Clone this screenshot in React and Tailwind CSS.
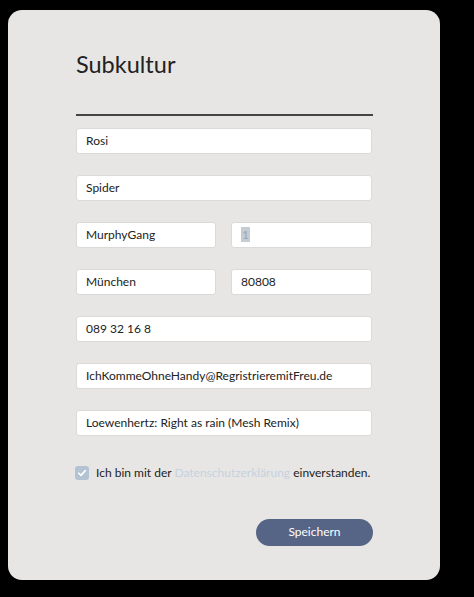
const font = { fontFamily: 'Lato, "Noto Sans", sans-serif' };

function Field({ value, className = "", selected = false }) {
  return (
    <div
      className={
        "h-[26px] bg-white border border-[#dcdad8] rounded-[3px] flex items-center pl-[9px] text-[12px] text-[#222] " +
        className
      }
    >
      {selected ? (
        <span className="bg-[#c5ccd4] text-[#9aa6b2] leading-[15px] px-[1px]">{value}</span>
      ) : (
        <span>{value}</span>
      )}
    </div>
  );
}

export default function App() {
  return (
    <div className="min-h-screen bg-black pt-[10px] pl-[8px]" style={font}>
      <div className="w-[432px] h-[570px] bg-[#e8e6e4] rounded-[14px] pl-[68px] pr-[67px] pt-[40px]">
        <h1 className="text-[23.5px] leading-[29px] text-[#222] font-normal">Subkultur</h1>
        <div className="mt-[35px] h-[1.5px] bg-[#444] w-[297px]" />
        <div className="mt-[12px] flex flex-col gap-[21px] w-[296px]">
          <Field value="Rosi" />
          <Field value="Spider" />
          <div className="flex gap-[15px]">
            <Field value="MurphyGang" className="w-[140px]" />
            <Field value="1" className="flex-1" selected />
          </div>
          <div className="flex gap-[15px]">
            <Field value="München" className="w-[140px]" />
            <Field value="80808" className="flex-1" />
          </div>
          <Field value="089 32 16 8" />
          <Field value="IchKommeOhneHandy@RegristrieremitFreu.de" />
          <Field value="Loewenhertz: Right as rain (Mesh Remix)" />
        </div>
        <label className="mt-[28px] -ml-[1px] flex items-center gap-[7px] text-[12px] text-[#222] whitespace-nowrap">
          <span className="shrink-0 w-[14px] h-[14px] rounded-[3px] bg-[#b3c3d3] flex items-center justify-center">
            <svg width="10" height="10" viewBox="0 0 10 10" fill="none">
              <path d="M1.8 5.2 L4 7.4 L8.3 2.6" stroke="white" strokeWidth="1.6" strokeLinecap="round" strokeLinejoin="round" />
            </svg>
          </span>
          <span>
            Ich bin mit der <span className="text-[#c4d2e0]">Datenschutzerklärung</span> einverstanden.
          </span>
        </label>
        <div className="mt-[37px] flex justify-end w-[297px]">
          <button className="w-[117px] h-[27px] rounded-full bg-[#566485] text-white text-[12px]">
            Speichern
          </button>
        </div>
      </div>
    </div>
  );
}
